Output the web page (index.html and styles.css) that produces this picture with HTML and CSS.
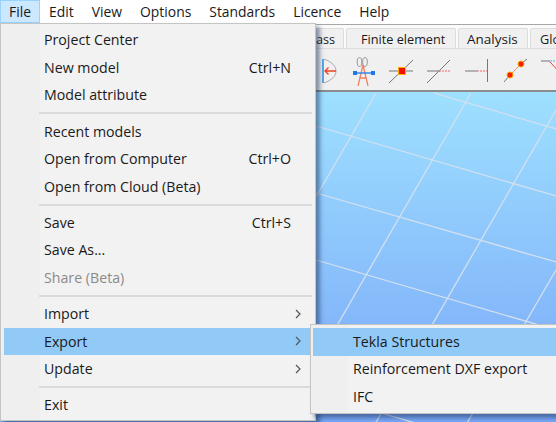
FILE: index.html
```html
<!DOCTYPE html>
<html lang="en">
<head>
    <meta charset="UTF-8">
    <title>File menu - Export</title>
    <link rel="stylesheet" href="styles.css">
</head>
<body>
    <div class="menubar">
        <span class="top-item active">File</span>
        <span class="top-item">Edit</span>
        <span class="top-item">View</span>
        <span class="top-item">Options</span>
        <span class="top-item">Standards</span>
        <span class="top-item">Licence</span>
        <span class="top-item">Help</span>
    </div>

    <div class="tabs">
        <span class="tab tab-cut">ass</span>
        <span class="tab tab-fem">Finite element</span>
        <span class="tab tab-analysis">Analysis</span>
        <span class="tab tab-last">Glo</span>
    </div>

    <div class="toolbar">
        <svg class="icon" width="17" height="32" viewBox="0 0 17 32">
            <path d="M1 5v24" stroke="#55aaee" stroke-width="2" fill="none"/>
            <path d="M2 5c8 3 12 7 12 12s-4 9-12 12" stroke="#aaa" fill="none"/>
            <path d="M3 17h11M6.500 13.500L3 17l3.500 3.500" stroke="#f04020" stroke-width="1.300" fill="none"/>
        </svg>
        <svg class="icon" width="22" height="32" viewBox="0 0 22 32">
            <ellipse cx="6.500" cy="8" rx="2.300" ry="4.500" stroke="#999" fill="none"/>
            <ellipse cx="12" cy="8" rx="2.300" ry="4.500" stroke="#999" fill="none"/>
            <path d="M5 32l5-21 5 21M7 24h6" stroke="#f08060" stroke-width="1.300" fill="none"/>
            <path d="M2 19h18" stroke="#3388ee" stroke-width="1.500"/>
            <rect x="0" y="17" width="4" height="4" fill="#1e78e8"/>
            <rect x="18" y="17" width="4" height="4" fill="#1e78e8"/>
        </svg>
        <svg class="icon" width="24" height="32" viewBox="0 0 24 32">
            <path d="M0 29L24 6M0 17h24" stroke="#777" fill="none"/>
            <rect x="9.500" y="13.500" width="7" height="7" fill="#f01000" stroke="#ffb000"/>
        </svg>
        <svg class="icon" width="24" height="32" viewBox="0 0 24 32">
            <path d="M0 29L23 6M0 17h12" stroke="#777" fill="none"/>
            <path d="M12 17h11" stroke="#f06060" stroke-dasharray="2 1" fill="none"/>
        </svg>
        <svg class="icon" width="24" height="32" viewBox="0 0 24 32">
            <path d="M0 17h12M22.500 5v23" stroke="#777" fill="none"/>
            <path d="M12 17h10" stroke="#f06060" stroke-dasharray="2 1" fill="none"/>
        </svg>
        <svg class="icon" width="24" height="32" viewBox="0 0 24 32">
            <path d="M1 28l6-7M18 10l6-5" stroke="#777" fill="none"/>
            <path d="M7 21L18 10" stroke="#f06060" stroke-dasharray="2 1" fill="none"/>
            <circle cx="7" cy="21" r="3" fill="#f02000" stroke="#ffa000"/>
            <circle cx="18" cy="10" r="3" fill="#f02000" stroke="#ffa000"/>
        </svg>
        <svg class="icon" width="24" height="32" viewBox="0 0 24 32">
            <path d="M0 7h9" stroke="#777" fill="none"/>
            <path d="M9 7h8" stroke="#55aaee" stroke-dasharray="2 1" fill="none"/>
            <path d="M9 8l14 15" stroke="#f04040" fill="none"/>
        </svg>
    </div>

    <div class="canvas">
        <svg class="grid" width="556" height="330" viewBox="0 92 556 330">
            <path d="M316 126L556 196M316 193L556 262M316 260L556 330M433 92.700L556 129M316 394L556 464"/>
            <path d="M376 93L316 197M471 93L316 362M556 110L360 450M556 270L456 442"/>
        </svg>
    </div>

    <div class="menu file-menu">
        <div class="menu-row"><span>Project Center</span></div>
        <div class="menu-row"><span>New model</span><span>Ctrl+N</span></div>
        <div class="menu-row"><span>Model attribute</span></div>
        <div class="menu-sep"></div>
        <div class="menu-row"><span>Recent models</span></div>
        <div class="menu-row"><span>Open from Computer</span><span>Ctrl+O</span></div>
        <div class="menu-row"><span>Open from Cloud (Beta)</span></div>
        <div class="menu-sep"></div>
        <div class="menu-row"><span>Save</span><span>Ctrl+S</span></div>
        <div class="menu-row"><span>Save As...</span></div>
        <div class="menu-row disabled"><span>Share (Beta)</span></div>
        <div class="menu-sep"></div>
        <div class="menu-row"><span>Import</span><svg class="arrow" width="6" height="10" viewBox="0 0 6 10"><path d="M1 1l4 4-4 4"/></svg></div>
        <div class="menu-row hot"><span>Export</span><svg class="arrow" width="6" height="10" viewBox="0 0 6 10"><path d="M1 1l4 4-4 4"/></svg></div>
        <div class="menu-row"><span>Update</span><svg class="arrow" width="6" height="10" viewBox="0 0 6 10"><path d="M1 1l4 4-4 4"/></svg></div>
        <div class="menu-sep"></div>
        <div class="menu-row"><span>Exit</span></div>
    </div>

    <div class="menu export-menu">
        <div class="menu-row hot"><span>Tekla Structures</span></div>
        <div class="menu-row"><span>Reinforcement DXF export</span></div>
        <div class="menu-row"><span>IFC</span></div>
    </div>
</body>
</html>
```

FILE: styles.css
```css
html, body {
    margin: 0;
    padding: 0;
}
body {
    position: relative;
    width: 556px;
    height: 422px;
    overflow: hidden;
    background-color: #f0f0f0;
    color: #1a1a1a;
    font-family: 'Open Sans', 'Noto Sans', sans-serif;
    font-size: 14.2px;
}

/* top menu */
.menubar {
    display: flex;
    height: 24px;
    align-items: stretch;
    background-color: #fff;
    font-size: 13.9px;
}
.top-item {
    display: flex;
    align-items: center;
    padding: 0 9px 1px;
}
.top-item.active {
    margin-bottom: 1px;
    padding-bottom: 0;
    background-color: #cce8ff;
    box-shadow: inset 0 0 0 1px #99d1ff;
}

/* tabs behind the menu */
.tabs {
    display: flex;
    height: 25px;
    box-sizing: border-box;
    padding-left: 300px;
    border-top: 1px solid #a8a8a8;
    border-bottom: 1px solid #dcdcdc;
    background-color: #fafafa;
    font-size: 12.7px;
}
.tab {
    display: flex;
    flex: none;
    align-items: center;
    box-sizing: border-box;
    margin-top: 3px;
    border: 1px solid #dcdcdc;
    border-bottom: none;
    border-radius: 2px 2px 0 0;
    background-color: #f0f0f0;
}
.tab-cut { width: 44px; padding-left: 15px; }
.tab-fem { width: 110px; padding-left: 14px; margin-left: 2px; }
.tab-analysis { width: 70px; padding-left: 8px; margin-left: 2px; font-size: 13.5px; }
.tab-last { width: 40px; padding-left: 9px; margin-left: 2px; }

.toolbar {
    display: flex;
    height: 43px;
    box-sizing: border-box;
    align-items: flex-start;
    gap: 14px;
    padding: 5px 0 0 322px;
    border-bottom: 2px solid #8c8c8c;
    background-color: #f0f0f0;
}
.icon {
    flex: none;
}

.canvas {
    height: 330px;
    background: linear-gradient(#9ee0ff, #79a6f8);
}
.grid {
    display: block;
}
.grid path {
    fill: none;
    stroke: #d3e0ee;
    stroke-width: 1.3;
}

/* dropdowns */
.menu {
    position: absolute;
    box-sizing: border-box;
    border: 1px solid #c4c4c4;
    box-shadow: 4px 4px 4px rgba(30, 50, 90, 0.5);
}
.file-menu {
    left: 0;
    top: 23px;
    width: 316px;
    height: 398px;
    padding: 2.5px 3px;
    background: linear-gradient(90deg, #efefef 39px, #f2f2f2 39px);
}
.export-menu {
    left: 310px;
    top: 324px;
    width: 260px;
    height: 90px;
    padding: 3px 2px;
    background: linear-gradient(90deg, #efefef 37px, #f2f2f2 37px);
}
.menu-row {
    display: flex;
    align-items: center;
    justify-content: space-between;
    box-sizing: border-box;
    height: 27.5px;
    padding: 0 21px 1px 40px;
}
.menu-row.hot {
    background-color: #91c9f7;
}
.menu-row.disabled {
    color: #8a8a8a;
}
.menu-sep {
    height: 2px;
    margin: 3.4px 0 3.4px 35px;
    background-color: #dadada;
}
.arrow {
    margin-right: -10px;
}
.arrow path {
    fill: none;
    stroke: #555;
    stroke-width: 1.2;
}
```
